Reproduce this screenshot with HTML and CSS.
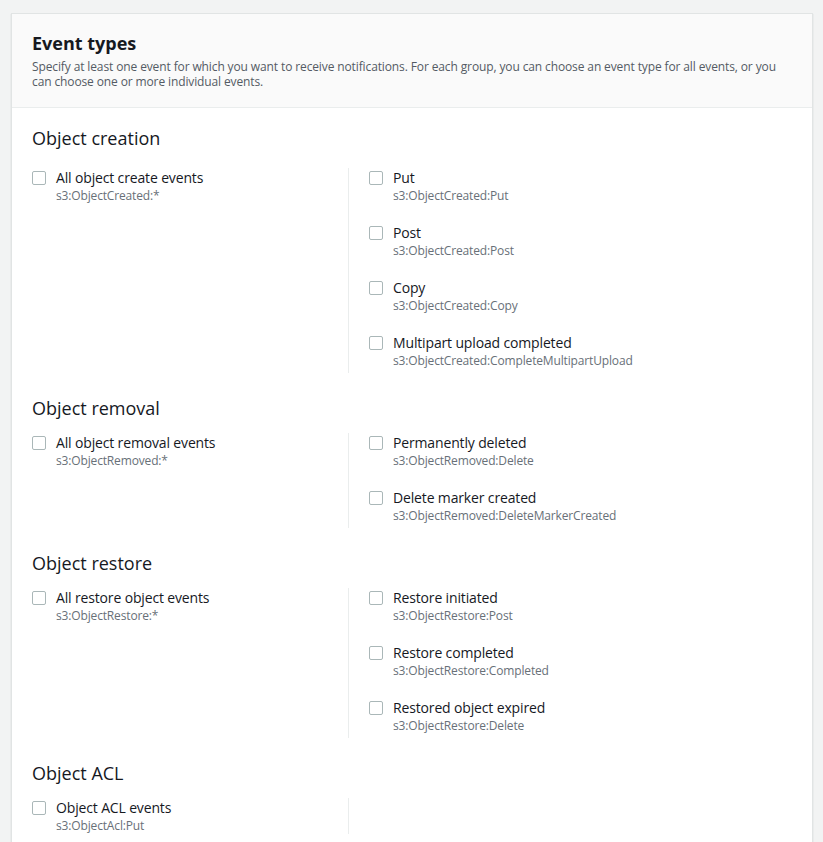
FILE: index.html
```html
<!DOCTYPE html>
<html>
<head>
<meta charset="utf-8">
<link rel="stylesheet" href="styles.css">
</head>
<body>
<div class="container">
  <div class="header">
    <h2 class="title">Event types</h2>
    <p class="desc">Specify at least one event for which you want to receive notifications. For each group, you can choose an event type for all events, or you can choose one or more individual events.</p>
  </div>
  <div class="content">
    <section class="group first">
      <h3 class="group-title">Object creation</h3>
      <div class="cols">
        <div class="col-left">
          <label class="item"><span class="box"></span><span class="text"><span class="label">All object create events</span><span class="sub">s3:ObjectCreated:*</span></span></label>
        </div>
        <div class="col-right">
          <label class="item"><span class="box"></span><span class="text"><span class="label">Put</span><span class="sub">s3:ObjectCreated:Put</span></span></label>
          <label class="item"><span class="box"></span><span class="text"><span class="label">Post</span><span class="sub">s3:ObjectCreated:Post</span></span></label>
          <label class="item"><span class="box"></span><span class="text"><span class="label">Copy</span><span class="sub">s3:ObjectCreated:Copy</span></span></label>
          <label class="item"><span class="box"></span><span class="text"><span class="label">Multipart upload completed</span><span class="sub">s3:ObjectCreated:CompleteMultipartUpload</span></span></label>
        </div>
      </div>
    </section>
    <section class="group">
      <h3 class="group-title">Object removal</h3>
      <div class="cols">
        <div class="col-left">
          <label class="item"><span class="box"></span><span class="text"><span class="label">All object removal events</span><span class="sub">s3:ObjectRemoved:*</span></span></label>
        </div>
        <div class="col-right">
          <label class="item"><span class="box"></span><span class="text"><span class="label">Permanently deleted</span><span class="sub">s3:ObjectRemoved:Delete</span></span></label>
          <label class="item"><span class="box"></span><span class="text"><span class="label">Delete marker created</span><span class="sub">s3:ObjectRemoved:DeleteMarkerCreated</span></span></label>
        </div>
      </div>
    </section>
    <section class="group">
      <h3 class="group-title">Object restore</h3>
      <div class="cols">
        <div class="col-left">
          <label class="item"><span class="box"></span><span class="text"><span class="label">All restore object events</span><span class="sub">s3:ObjectRestore:*</span></span></label>
        </div>
        <div class="col-right">
          <label class="item"><span class="box"></span><span class="text"><span class="label">Restore initiated</span><span class="sub">s3:ObjectRestore:Post</span></span></label>
          <label class="item"><span class="box"></span><span class="text"><span class="label">Restore completed</span><span class="sub">s3:ObjectRestore:Completed</span></span></label>
          <label class="item"><span class="box"></span><span class="text"><span class="label">Restored object expired</span><span class="sub">s3:ObjectRestore:Delete</span></span></label>
        </div>
      </div>
    </section>
    <section class="group">
      <h3 class="group-title">Object ACL</h3>
      <div class="cols">
        <div class="col-left">
          <label class="item"><span class="box"></span><span class="text"><span class="label">Object ACL events</span><span class="sub">s3:ObjectAcl:Put</span></span></label>
        </div>
        <div class="col-right"></div>
      </div>
    </section>
  </div>
</div>
</body>
</html>
```
FILE: styles.css
```css
html, body {
  margin: 0;
  padding: 0;
}
body {
  background: #f2f3f3;
  font-family: "Open Sans", "Noto Sans", sans-serif;
  color: #16191f;
  padding: 13px 10px 0 11px;
}
.container {
  background: #fff;
  border: 1px solid #e1e4e4;
  border-bottom: none;
  box-shadow: 0 1px 1px 0 rgba(0, 28, 36, 0.2);
}
.header {
  background: #fafafa;
  border-bottom: 1px solid #eaeded;
  padding: 17px 20px 18px 20px;
}
.title {
  margin: 0;
  font-size: 18px;
  line-height: 24px;
  font-weight: 700;
  color: #16191f;
}
.desc {
  margin: 4px 0 0 0;
  font-size: 12px;
  line-height: 15px;
  letter-spacing: -0.12px;
  color: #545b64;
}
.content {
  padding: 18px 20px 40px 20px;
}
.group {
  margin-bottom: 23px;
}
.group-title {
  margin: 0 0 13px 0;
  font-size: 18px;
  line-height: 24px;
  font-weight: 400;
  color: #16191f;
}
.group.first .group-title {
  margin-bottom: 18px;
}
.cols {
  display: grid;
  grid-template-columns: 316px 1fr;
}
.col-right {
  border-left: 1px solid #eaeded;
  padding-left: 20px;
  display: flex;
  flex-direction: column;
  gap: 19px;
  padding-bottom: 4px;
}
.item {
  display: flex;
  align-items: flex-start;
  gap: 10px;
}
.box {
  flex: none;
  width: 12px;
  height: 12px;
  border: 1px solid #aab7b8;
  border-radius: 2px;
  margin-top: 3px;
  background: #fff;
}
.text {
  display: flex;
  flex-direction: column;
}
.label {
  font-size: 14px;
  line-height: 20px;
  letter-spacing: -0.15px;
  color: #16191f;
}
.sub {
  font-size: 12px;
  line-height: 16px;
  letter-spacing: -0.15px;
  color: #687078;
}
```
